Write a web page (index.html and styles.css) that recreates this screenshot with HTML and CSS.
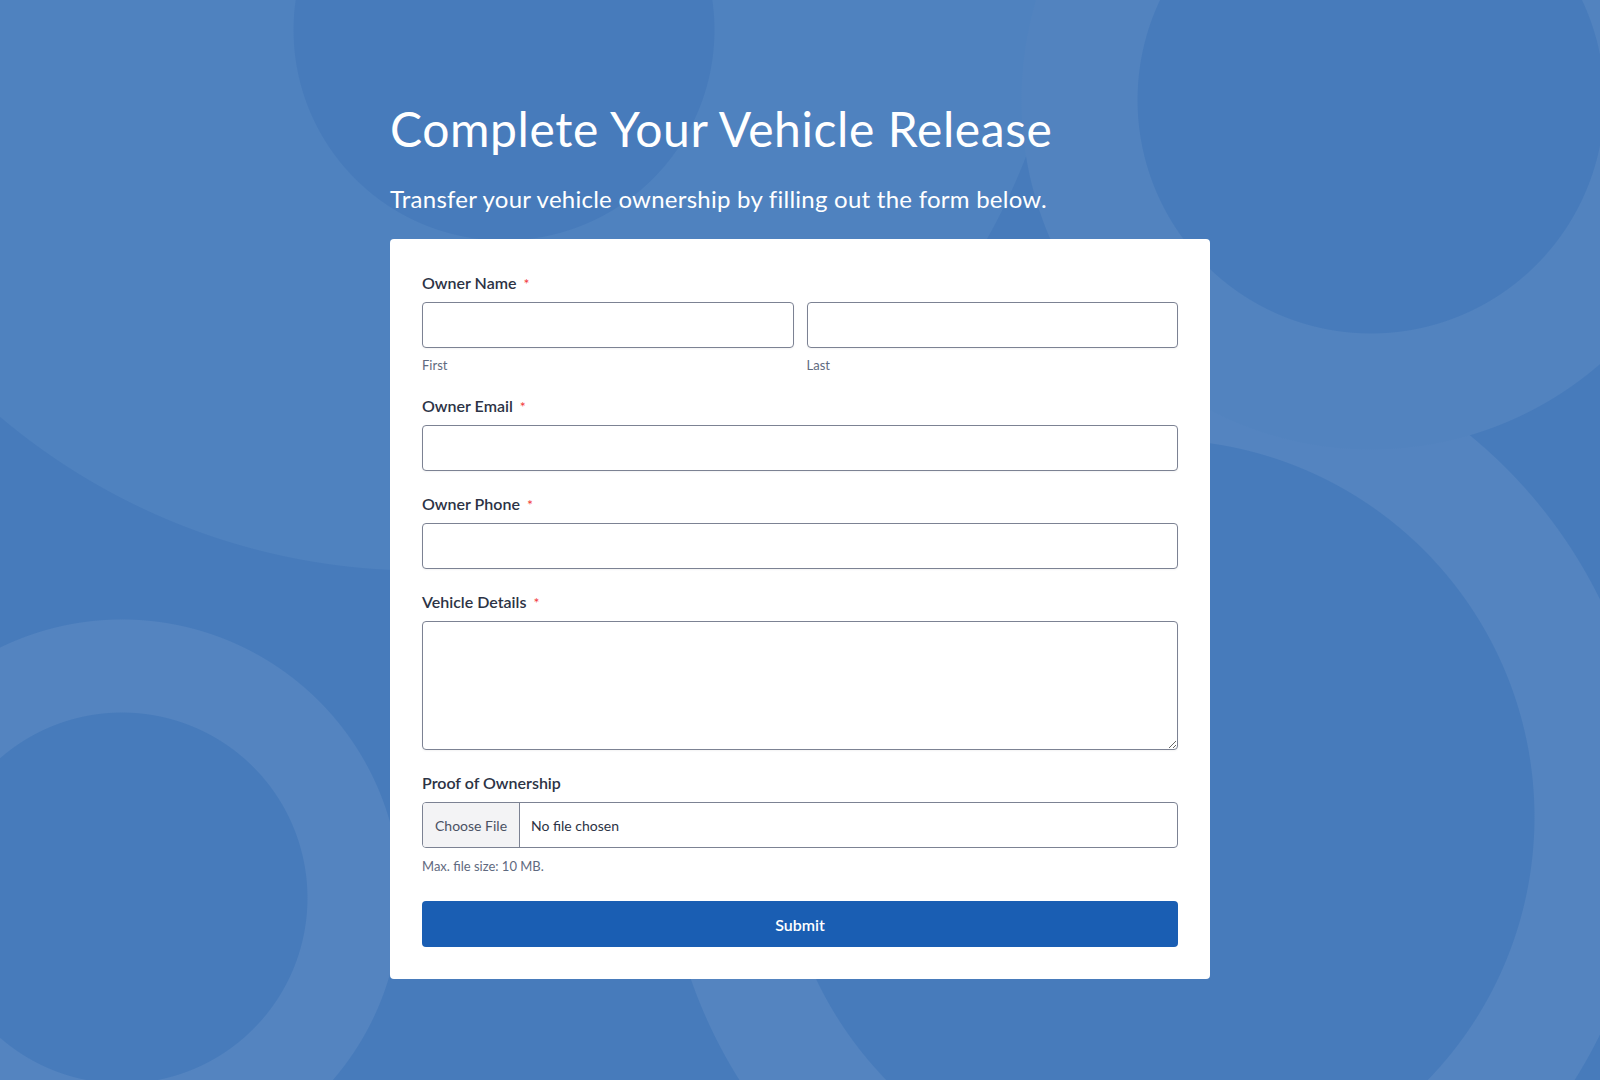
FILE: index.html
```html
<!DOCTYPE html>
<html lang="en">
<head>
<meta charset="utf-8">
<title>Complete Your Vehicle Release</title>
<link rel="stylesheet" href="styles.css">
</head>
<body>
<main class="page">
  <h1 class="title">Complete Your Vehicle Release</h1>
  <p class="subtitle">Transfer your vehicle ownership by filling out the form below.</p>
  <form class="card">
    <div class="field">
      <label class="label">Owner Name <span class="req">*</span></label>
      <div class="name-row">
        <div class="name-col">
          <input class="input" type="text">
          <span class="sublabel">First</span>
        </div>
        <div class="name-col">
          <input class="input" type="text">
          <span class="sublabel">Last</span>
        </div>
      </div>
    </div>
    <div class="field">
      <label class="label">Owner Email <span class="req">*</span></label>
      <input class="input" type="text">
    </div>
    <div class="field">
      <label class="label">Owner Phone <span class="req">*</span></label>
      <input class="input" type="text">
    </div>
    <div class="field">
      <label class="label">Vehicle Details <span class="req">*</span></label>
      <textarea class="input textarea"></textarea>
    </div>
    <div class="field">
      <label class="label">Proof of Ownership</label>
      <div class="file">
        <span class="file-btn">Choose File</span>
        <span class="file-name">No file chosen</span>
      </div>
      <span class="hint">Max. file size: 10 MB.</span>
    </div>
    <button class="submit" type="button">Submit</button>
  </form>
</main>
</body>
</html>
```
FILE: styles.css
```css
html, body {
  margin: 0;
  padding: 0;
}
body {
  min-height: 1080px;
  font-family: Lato, "Open Sans", sans-serif;
  background-color: #477bbb;
  background-image:
    radial-gradient(circle at 504px 30px, #477bbb 210px, transparent 211px),
    radial-gradient(circle at 1371px 100px, #477bbb 233px, transparent 234px),
    radial-gradient(circle at 1157px 817px, #477bbb 377px, transparent 378px),
    radial-gradient(circle at 122px 898px, #477bbb 185px, transparent 186px),
    radial-gradient(circle at 1371px 100px, #5283bf 349px, transparent 350px),
    radial-gradient(circle at 1157px 817px, #5484c0 493px, transparent 494px),
    radial-gradient(circle at 122px 898px, #5484c0 278px, transparent 279px),
    radial-gradient(circle at 420px -80px, #4f82bf 650px, transparent 651px);
  background-repeat: no-repeat;
}
.page {
  width: 820px;
  margin: 0 auto;
  padding-top: 100px;
  padding-bottom: 80px;
}
.title {
  margin: 0;
  font-size: 48px;
  line-height: 58px;
  font-weight: 400;
  letter-spacing: 0.6px;
  color: #ffffff;
}
.subtitle {
  margin: 26px 0 0;
  font-size: 24px;
  line-height: 29px;
  font-weight: 400;
  letter-spacing: 0.25px;
  color: #ffffff;
}
.card {
  margin: 26px 0 0;
  background: #ffffff;
  border-radius: 4px;
  padding: 35px 32px 32px;
  display: flex;
  flex-direction: column;
  gap: 24px;
}
.field {
  display: flex;
  flex-direction: column;
}
.label {
  display: block;
  font-size: 16px;
  line-height: 18px;
  height: 18px;
  font-weight: 600;
  color: #2c3345;
  margin-bottom: 10px;
}
.req {
  font-size: 14px;
  line-height: 1;
  color: #f23a3c;
  margin-left: 3px;
  font-weight: 400;
}
.name-row {
  display: grid;
  grid-template-columns: 1fr 1fr;
  column-gap: 13px;
}
.name-col {
  display: flex;
  flex-direction: column;
}
.input {
  display: block;
  width: 100%;
  box-sizing: border-box;
  height: 46px;
  margin: 0;
  border: 1px solid #7c8293;
  border-radius: 4px;
  background: #ffffff;
  font-family: Lato, sans-serif;
  font-size: 15px;
  color: #2c3345;
  box-shadow: 0 1px 2px rgba(43, 50, 70, 0.06);
}
.textarea {
  height: 129px;
  resize: vertical;
}
.sublabel {
  margin-top: 9px;
  font-size: 13px;
  line-height: 16px;
  color: #5f6a80;
}
.file {
  display: flex;
  align-items: stretch;
  height: 46px;
  box-sizing: border-box;
  border: 1px solid #7c8293;
  border-radius: 4px;
  overflow: hidden;
}
.file-btn {
  display: flex;
  align-items: center;
  padding: 0 12px;
  background: #f3f3f5;
  border-right: 1px solid #7c8293;
  font-size: 14px;
  color: #4a5163;
}
.file-name {
  display: flex;
  align-items: center;
  padding-left: 11px;
  font-size: 14px;
  color: #2c3345;
}
.hint {
  margin-top: 10px;
  font-size: 13px;
  line-height: 16px;
  color: #5f6a80;
}
.submit {
  margin-top: 3px;
  height: 46px;
  border: 0;
  border-radius: 4px;
  background: #1a5eb3;
  color: #ffffff;
  font-family: Lato, sans-serif;
  font-size: 16px;
  font-weight: 600;
  cursor: pointer;
}
```
